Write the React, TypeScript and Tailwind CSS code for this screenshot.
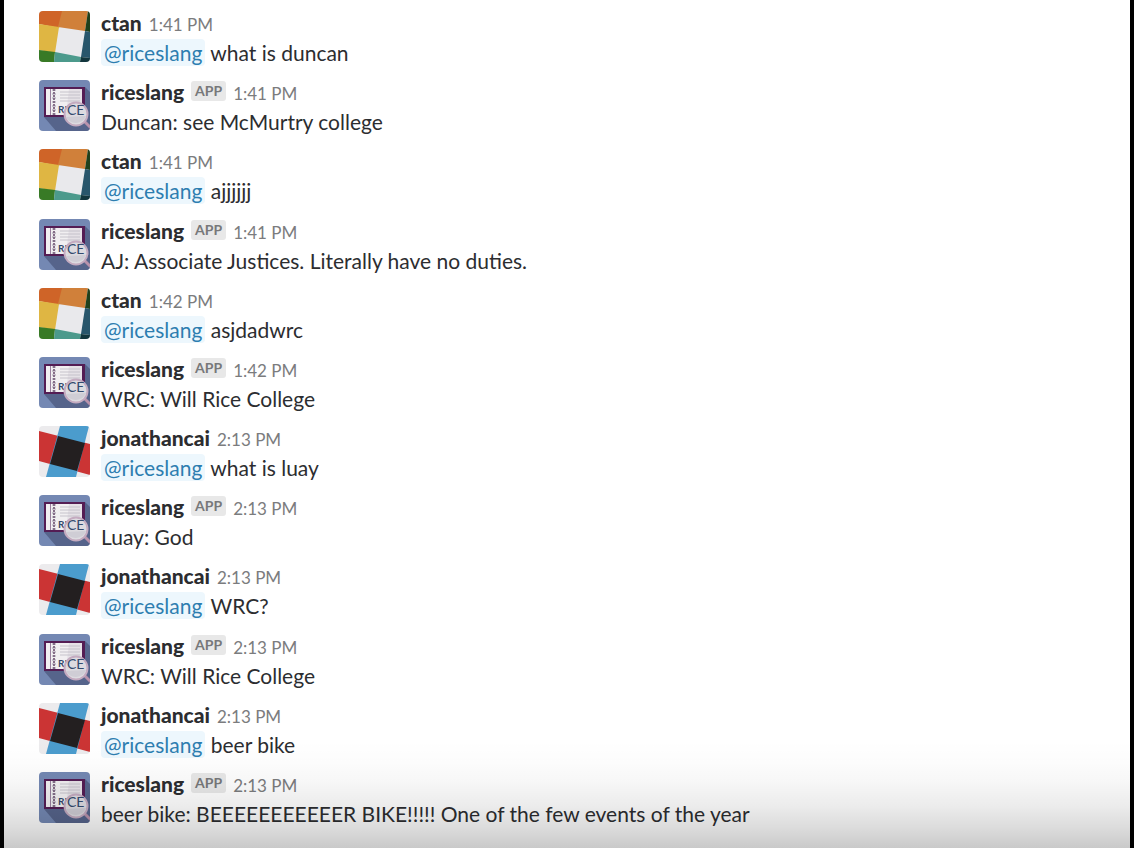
type Author = "ctan" | "riceslang" | "jonathancai";

interface Message {
  author: Author;
  time: string;
  text: string;
  mention?: boolean;
}

const messages: Message[] = [
  { author: "ctan", time: "1:41 PM", text: "what is duncan", mention: true },
  { author: "riceslang", time: "1:41 PM", text: "Duncan: see McMurtry college" },
  { author: "ctan", time: "1:41 PM", text: "ajjjjjj", mention: true },
  { author: "riceslang", time: "1:41 PM", text: "AJ: Associate Justices. Literally have no duties." },
  { author: "ctan", time: "1:42 PM", text: "asjdadwrc", mention: true },
  { author: "riceslang", time: "1:42 PM", text: "WRC: Will Rice College" },
  { author: "jonathancai", time: "2:13 PM", text: "what is luay", mention: true },
  { author: "riceslang", time: "2:13 PM", text: "Luay: God" },
  { author: "jonathancai", time: "2:13 PM", text: "WRC?", mention: true },
  { author: "riceslang", time: "2:13 PM", text: "WRC: Will Rice College" },
  { author: "jonathancai", time: "2:13 PM", text: "beer bike", mention: true },
  { author: "riceslang", time: "2:13 PM", text: "beer bike: BEEEEEEEEEEER BIKE!!!!! One of the few events of the year" },
];

const avatarClass = "size-[51px] shrink-0 rounded-[4px]";

function CtanAvatar() {
  return (
    <svg className={avatarClass} viewBox="0 0 51 51" aria-hidden="true">
      <rect width="51" height="51" fill="#e9e9ec" />
      <path d="M0 0H24L20 17L0 13Z" fill="#cf6428" />
      <path d="M23 0H49L46 20L19 16Z" fill="#d0803a" />
      <path d="M49 0H51V21L46 20Z" fill="#20401c" />
      <path d="M0 13L20 16L16 42L0 39Z" fill="#dfb643" />
      <path d="M46 20L51 21V47L42 46Z" fill="#28566b" />
      <path d="M0 39L16 41L15 51H0Z" fill="#387a26" />
      <path d="M16 41L42 46L41 51H15Z" fill="#4c9a8c" />
      <path d="M42 46L51 47V51H41Z" fill="#12363d" />
    </svg>
  );
}

function JonathanAvatar() {
  return (
    <svg className={avatarClass} viewBox="0 0 51 51" aria-hidden="true">
      <rect width="51" height="51" fill="#ecebed" />
      <path d="M0 5L51 18V49L0 35Z" fill="#cb3434" />
      <path d="M21 0H50L37 51H7Z" fill="#4b9ccd" />
      <path d="M19 10L46 17L38 45L11 38Z" fill="#231f20" />
    </svg>
  );
}

function RiceAvatar() {
  return (
    <svg className={avatarClass} viewBox="0 0 51 51" aria-hidden="true">
      <rect width="51" height="51" fill="#7488b3" />
      <path d="M5 37L46 7L51 12V51H17Z" fill="#56648b" />
      <rect x="5" y="7" width="41" height="30" fill="#541d54" />
      <rect x="7" y="9" width="36" height="26" fill="#f1eff1" />
      <path d="M11.500 9V35" stroke="#84658a" strokeWidth=".8" />
      <path d="M15 9V35" stroke="#4d2950" strokeWidth="1.300" strokeDasharray="2 1" />
      <path d="M13 10H17M13 14H17M13 18H17M13 22H17M13 26H17M13 30H17M13 34H17" stroke="#80728a" strokeWidth=".7" />
      <path d="M30 9H43V35H27Z" fill="#d6d1da" opacity=".45" />
      <path d="M21 12H41M21 15H41M21 18H41M21 21H41" stroke="#bdb9c3" strokeWidth=".8" />
      <text x="19" y="33" fill="#34476a" fontFamily="Lato, sans-serif" fontSize="10" fontWeight="700">RI</text>
      <path d="M45 41L52 48" stroke="#b993ac" strokeWidth="3" />
      <circle cx="37" cy="34" r="11.5" fill="#dddbe0" stroke="#c4abc0" strokeWidth="2" />
      <path d="M27 37A11 11 0 0 0 47 36Z" fill="#c8c6d0" opacity=".65" />
      <text x="28" y="35" fill="#344a6d" fontFamily="Lato, sans-serif" fontSize="14">CE</text>
    </svg>
  );
}

function Avatar({ author }: { author: Author }) {
  if (author === "ctan") return <CtanAvatar />;
  if (author === "jonathancai") return <JonathanAvatar />;
  return <RiceAvatar />;
}

function MessageRow({ message }: { message: Message }) {
  return (
    <li className="flex h-[58px] items-start gap-[11px]">
      <Avatar author={message.author} />
      <article className="min-w-0">
        <header className="flex h-[27px] items-baseline gap-[7px] leading-6">
          <span className="font-['Lato_Black','Lato',sans-serif] text-[21px] font-black">{message.author}</span>
          {message.author === "riceslang" && (
            <span className="self-start mt-px rounded-[3px] bg-[#e8e8e8] px-1 text-[14px] leading-5 font-bold text-[#77787a]">APP</span>
          )}
          <time className="text-[17px] text-[#7b7c7e]">{message.time}</time>
        </header>
        <p className="text-[21px] leading-[29px]">
          {message.mention && (
            <>
              <a href="#riceslang" className="rounded-[4px] bg-[#edf7fd] px-[3px] py-px text-[#2d7eb0]">@riceslang</a>{" "}
            </>
          )}
          {message.text}
        </p>
      </article>
    </li>
  );
}

export default function App() {
  return (
    <main className="relative min-h-screen border-x-4 border-black bg-white font-['Lato',sans-serif] text-[#2c2d30]">
      <ol className="flex min-h-screen flex-col justify-between gap-2 px-[35px] pt-[11px] pb-[18px]" aria-label="Messages">
        {messages.map((message, index) => (
          <MessageRow key={index} message={message} />
        ))}
      </ol>
      <div className="pointer-events-none absolute inset-x-0 bottom-0 h-[108px] bg-[linear-gradient(to_bottom,transparent_0%,rgb(0_0_0/0.01)_20%,rgb(0_0_0/0.03)_38%,rgb(0_0_0/0.08)_62%,rgb(0_0_0/0.14)_82%,rgb(0_0_0/0.21)_100%)]" />
    </main>
  );
}
